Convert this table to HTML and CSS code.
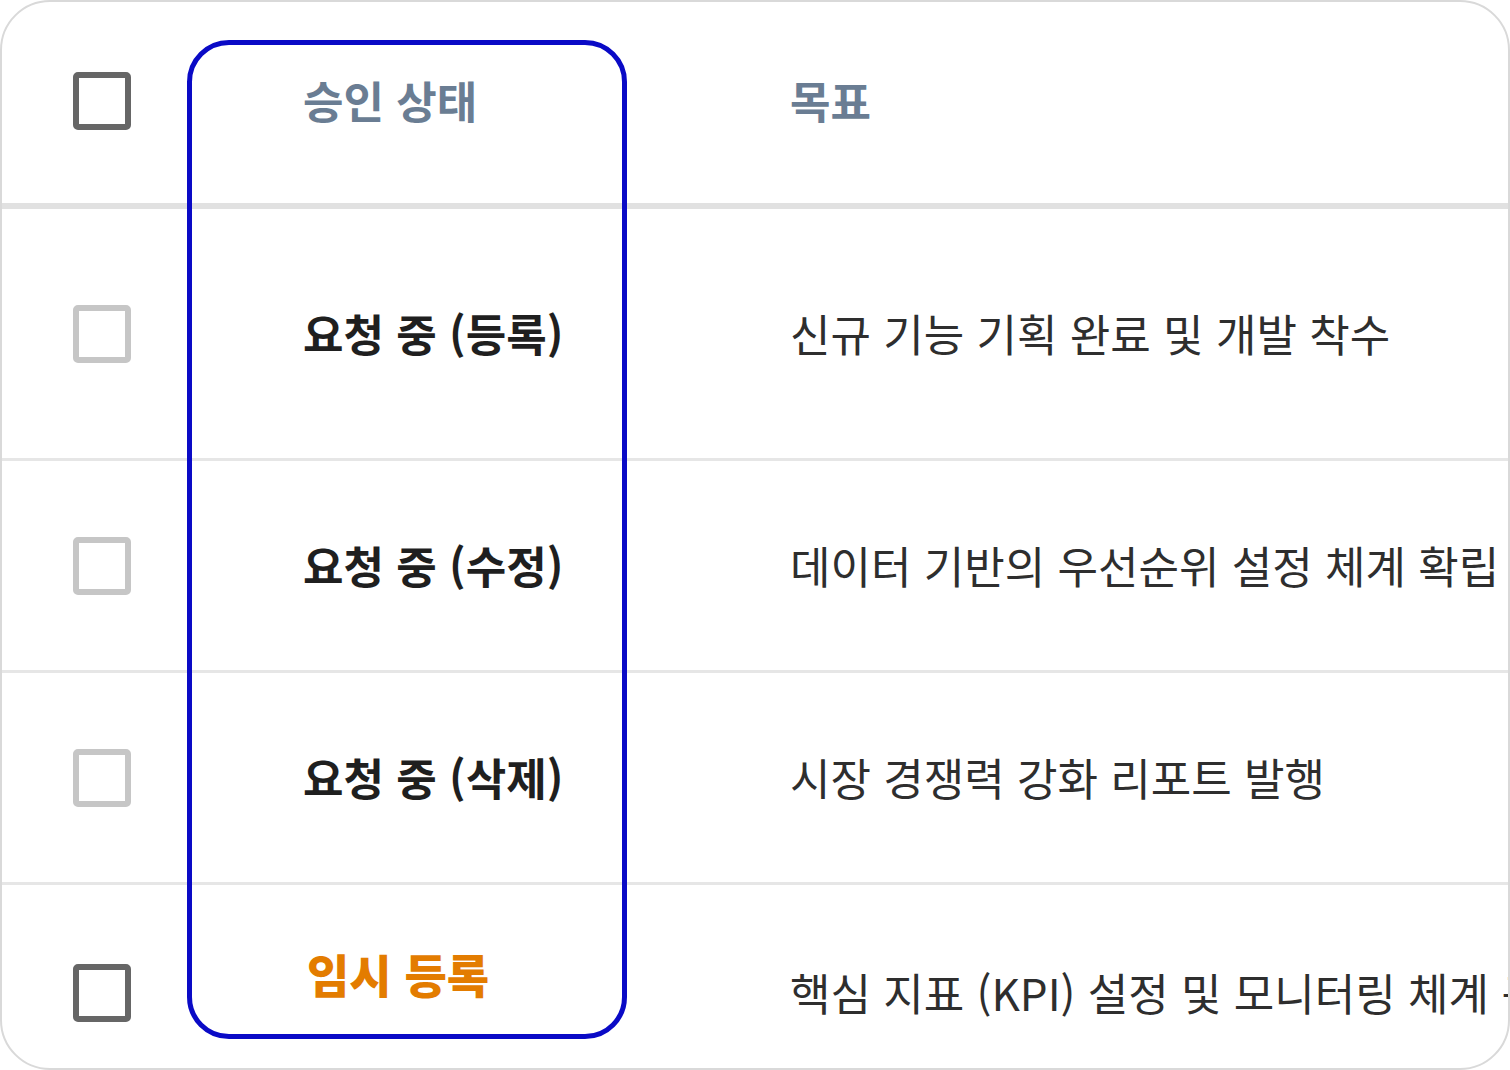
FILE: index.html
```html
<!DOCTYPE html>
<html lang="ko">
<head>
<meta charset="utf-8">
<title>승인 상태 테이블</title>
<link rel="stylesheet" href="styles.css">
</head>
<body>
<div class="card">
  <div class="table">
    <div class="row head">
      <div class="cell check"><span class="box dark"></span></div>
      <div class="cell status">승인 상태</div>
      <div class="cell goal">목표</div>
    </div>
    <div class="row r1">
      <div class="cell check"><span class="box light"></span></div>
      <div class="cell status strong">요청 중 (등록)</div>
      <div class="cell goal">신규 기능 기획 완료 및 개발 착수</div>
    </div>
    <div class="row">
      <div class="cell check"><span class="box light"></span></div>
      <div class="cell status strong">요청 중 (수정)</div>
      <div class="cell goal">데이터 기반의 우선순위 설정 체계 확립</div>
    </div>
    <div class="row">
      <div class="cell check"><span class="box light"></span></div>
      <div class="cell status strong">요청 중 (삭제)</div>
      <div class="cell goal">시장 경쟁력 강화 리포트 발행</div>
    </div>
    <div class="row last">
      <div class="cell check"><span class="box dark"></span></div>
      <div class="cell status draft">임시 등록</div>
      <div class="cell goal">핵심 지표 (KPI) 설정 및 모니터링 체계 구축</div>
    </div>
  </div>
  <div class="highlight"></div>
</div>
</body>
</html>
```
FILE: styles.css
```css
* { box-sizing: border-box; }
html, body { margin: 0; padding: 0; background: #ffffff; }
body {
  font-family: "Noto Sans CJK KR", "Noto Sans", sans-serif;
  width: 1510px;
  height: 1070px;
  overflow: hidden;
}
.card {
  position: relative;
  width: 1510px;
  height: 1070px;
  border: 2px solid #d9d9d9;
  border-radius: 50px;
  overflow: hidden;
  background: #fff;
}
.table {
  display: flex;
  flex-direction: column;
}
.row {
  display: grid;
  grid-template-columns: 185px 438px 1fr;
  align-items: center;
  height: 212px;
  border-bottom: 3px solid #e6e6e6;
}
.row.head {
  height: 207px;
  border-bottom: 6px solid #e1e1e1;
}
.row.r1 { height: 252px; }
.row.last { height: 215px; border-bottom: none; }
.cell {
  font-size: 44px;
  line-height: 1.45;
  white-space: nowrap;
}
.goal { overflow: hidden; }
.check {
  display: flex;
  justify-content: flex-start;
  padding-left: 71px;
}
.box {
  display: block;
  width: 58px;
  height: 58px;
  border-radius: 5px;
  border: 6px solid #666;
}
.box.light { border-color: #c6c6c6; }
.box.dark { border-color: #666666; }
.head .cell { margin-top: -4px; }
.head .status, .head .goal {
  color: #6a7d93;
  font-weight: 700;
}
.status { padding-left: 116px; }
.goal {
  padding-left: 165px;
  color: #2e2e2e;
  font-weight: 400;
}
.strong { color: #1f1f1f; font-weight: 700; }
.draft {
  color: #e37c00;
  font-size: 46px;
  font-weight: 800;
  padding-left: 120px;
  margin-bottom: 38px;
}
.highlight {
  position: absolute;
  left: 185px;
  top: 38px;
  width: 440px;
  height: 999px;
  border: 5px solid #0a0ac6;
  border-radius: 42px;
  pointer-events: none;
}
```
